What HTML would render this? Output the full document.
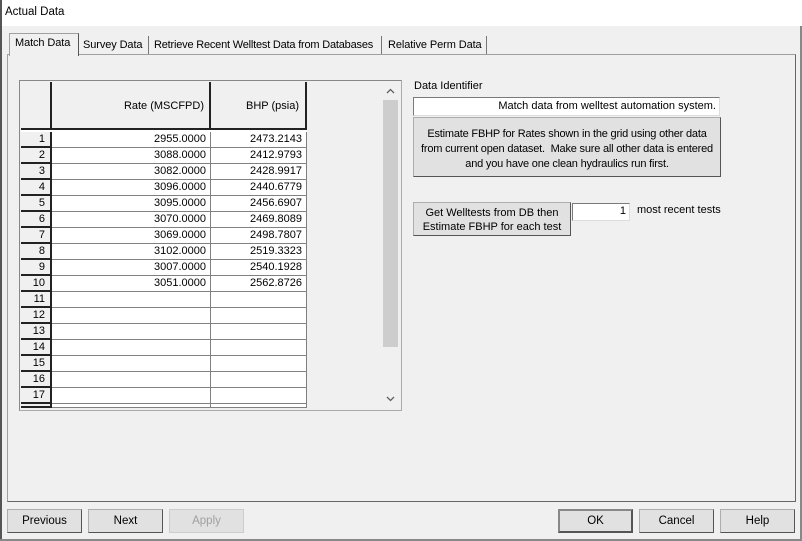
<!DOCTYPE html><html><head><style>
*{box-sizing:border-box;margin:0;padding:0}
body{width:802px;height:541px;background:#f0f0f0;font-family:"Liberation Sans",Arial,sans-serif;font-size:11px;color:#000;position:relative;overflow:hidden;white-space:nowrap}
.a{position:absolute}
.btn{position:absolute;background:#e1e1e1;border:1px solid #adadad;border-right-color:#555;border-bottom-color:#555;text-align:center;font-size:11.5px}
.cell{position:absolute;background:#fff;border-bottom:1px solid #808080;border-right:1px solid #808080;text-align:right;padding-right:4px;font-size:11px;line-height:15px}
.rh{position:absolute;background:#f0f0f0;border-bottom:2px solid #222;border-right:2px solid #222;text-align:right;padding-right:5px;font-size:11px;line-height:15px}
.tab{position:absolute;top:39px;font-size:11px;letter-spacing:-0.1px}
</style></head><body>
<div class="a" style="left:0;top:0;width:802px;height:26px;background:#fff"></div>
<div class="a" style="left:5px;top:6px;font-size:11.5px">Actual Data</div>
<div class="a" style="left:0;top:0;width:2px;height:541px;background:#555"></div>
<div class="a" style="left:0;top:539px;width:802px;height:2px;background:#888"></div>
<div class="a" style="left:800px;top:26px;width:2px;height:515px;background:#888"></div>
<div class="a" style="left:7px;top:54px;width:789px;height:448px;border:1px solid #a0a0a0;border-right-color:#666;border-bottom-color:#666"></div>
<div class="a" style="left:9px;top:33px;width:70px;height:23px;background:#f0f0f0;border:1px solid #a0a0a0;border-bottom:none;border-right-color:#555"></div>
<div class="tab" style="left:15px;top:37px">Match Data</div>
<div class="a" style="left:79px;top:36px;width:70px;height:18px;border-right:1px solid #777"></div>
<div class="tab" style="left:83px">Survey Data</div>
<div class="a" style="left:149px;top:36px;width:233px;height:18px;border-right:1px solid #777"></div>
<div class="tab" style="left:154px;letter-spacing:-0.2px">Retrieve Recent Welltest Data from Databases</div>
<div class="a" style="left:382px;top:36px;width:105px;height:18px;border-right:1px solid #777"></div>
<div class="tab" style="left:388px">Relative Perm Data</div>
<div class="a" style="left:19px;top:80px;width:383px;height:331px;border:1px solid #888;border-right-color:#aaa;border-bottom-color:#aaa;background:#f0f0f0"></div>
<div class="a" style="left:21px;top:82px;width:31px;height:48px;border-right:2px solid #222;border-bottom:2px solid #222"></div>
<div class="a" style="left:52px;top:82px;width:159px;height:48px;border-right:2px solid #222;border-bottom:2px solid #222;text-align:right;padding:18px 5px 0 0;font-size:11px">Rate (MSCFPD)</div>
<div class="a" style="left:211px;top:82px;width:96px;height:48px;border-right:2px solid #222;border-bottom:2px solid #222;text-align:right;padding:18px 6px 0 0;font-size:11px">BHP (psia)</div>
<div class="a" style="left:21px;top:130px;width:286px;height:2px;background:#fff"></div>
<div id="rows"></div>
<div class="a" style="left:382px;top:82px;width:17px;height:327px;background:#f0f0f0"></div>
<div class="a" style="left:383px;top:100px;width:15px;height:247px;background:#cdcdcd"></div>
<svg class="a" style="left:386px;top:88px" width="9" height="6"><path d="M1 5L4.5 1.5L8 5" stroke="#606060" stroke-width="1.3" fill="none"/></svg>
<svg class="a" style="left:386px;top:396px" width="9" height="6"><path d="M1 1L4.5 4.5L8 1" stroke="#606060" stroke-width="1.3" fill="none"/></svg>
<div class="a" style="left:414px;top:80px">Data Identifier</div>
<div class="a" style="left:413px;top:97px;width:307px;height:19px;background:#fff;border:1px solid #7a7a7a;border-right-color:#ddd;border-bottom-color:#ddd;text-align:right;padding:2px 3px 0 0;font-size:11px">Match data from welltest automation system.</div>
<div class="btn" style="left:413px;top:117px;width:308px;height:60px;padding-top:9px;line-height:15px;font-size:11px;letter-spacing:-0.2px">Estimate FBHP for Rates shown in the grid using other data<br>from current open dataset.&nbsp; Make sure all other data is entered<br>and you have one clean hydraulics run first.</div>
<div class="btn" style="left:413px;top:202px;width:158px;height:34px;padding-top:3px;line-height:14px;font-size:11px">Get Welltests from DB then<br>Estimate FBHP for each test</div>
<div class="a" style="left:572px;top:203px;width:58px;height:18px;background:#fff;border:1px solid #7a7a7a;border-right-color:#ddd;border-bottom-color:#ddd;text-align:right;padding:1px 3px 0 0;font-size:11px">1</div>
<div class="a" style="left:637px;top:204px;font-size:11px">most recent tests</div>
<div class="btn" style="left:7px;top:509px;width:75px;height:24px;line-height:22px">Previous</div>
<div class="btn" style="left:88px;top:509px;width:75px;height:24px;line-height:22px">Next</div>
<div class="btn" style="left:169px;top:509px;width:75px;height:24px;line-height:22px;color:#a0a0a0;border-color:#ccc">Apply</div>
<div class="btn" style="left:558px;top:509px;width:75px;height:24px;line-height:20px;border:2px solid #555;border-top-color:#888;border-left-color:#888">OK</div>
<div class="btn" style="left:639px;top:509px;width:75px;height:24px;line-height:22px">Cancel</div>
<div class="btn" style="left:720px;top:509px;width:75px;height:24px;line-height:22px">Help</div>
<script>
var d=[["2955.0000","2473.2143"],["3088.0000","2412.9793"],["3082.0000","2428.9917"],["3096.0000","2440.6779"],["3095.0000","2456.6907"],["3070.0000","2469.8089"],["3069.0000","2498.7807"],["3102.0000","2519.3323"],["3007.0000","2540.1928"],["3051.0000","2562.8726"]];
var h="";
for(var i=0;i<18;i++){var t=132+i*16;var hh=i==17?4:16;var r=d[i]||["",""];
h+='<div class="rh" style="left:21px;top:'+t+'px;width:31px;height:'+hh+'px">'+(i<17?i+1:"")+'</div>';
h+='<div class="cell" style="left:52px;top:'+t+'px;width:159px;height:'+hh+'px">'+(i<17?r[0]:"")+'</div>';
h+='<div class="cell" style="left:211px;top:'+t+'px;width:96px;height:'+hh+'px">'+(i<17?r[1]:"")+'</div>';}
document.getElementById("rows").innerHTML=h;
</script>
</body></html>
